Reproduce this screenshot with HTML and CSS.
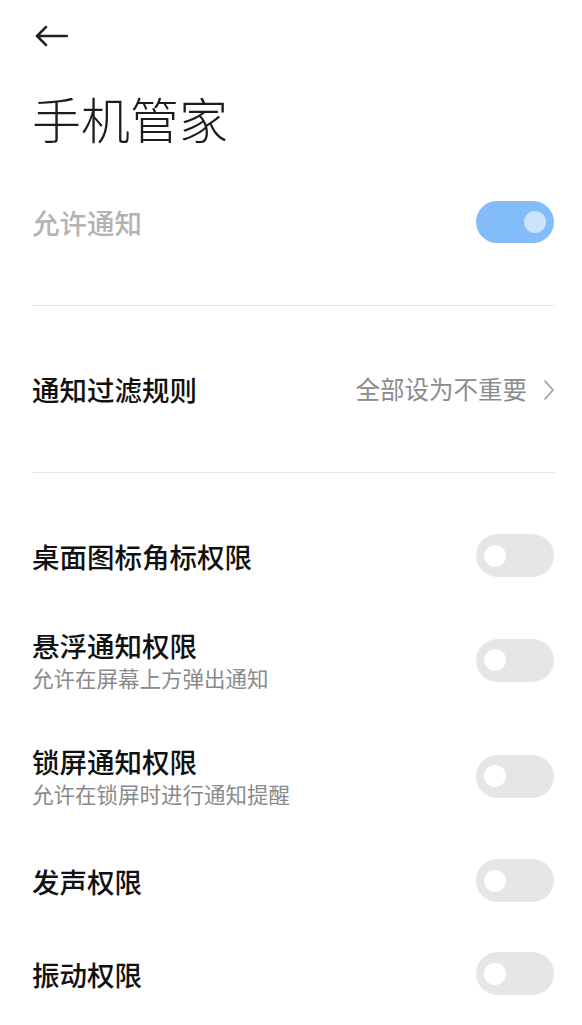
FILE: index.html
```html
<!DOCTYPE html>
<html lang="zh-CN">
<head>
<meta charset="utf-8">
<title>手机管家</title>
<link rel="stylesheet" href="styles.css">
</head>
<body>
<div class="page">
  <header class="header">
    <svg class="back" width="34" height="22" viewBox="0 0 34 22" aria-hidden="true">
      <path d="M33 11 H3 M12 2 L3 11 L12 20" fill="none" stroke="#222" stroke-width="2.5" stroke-linecap="round" stroke-linejoin="round"/>
    </svg>
  </header>
  <h1 class="title">手机管家</h1>

  <div class="allow-row">
    <span class="allow-label">允许通知</span>
    <span class="toggle on"><span class="knob"></span></span>
  </div>

  <div class="divider first"></div>

  <div class="filter-row">
    <span class="row-title">通知过滤规则</span>
    <span class="filter-value">全部设为不重要
      <svg class="chev" width="12" height="22" viewBox="0 0 12 22" aria-hidden="true">
        <path d="M2 2 L10 11 L2 20" fill="none" stroke="#9a9a9a" stroke-width="1.6" stroke-linecap="round" stroke-linejoin="round"/>
      </svg>
    </span>
  </div>

  <div class="divider"></div>

  <div class="rows">
    <div class="row">
      <div class="text"><div class="row-title">桌面图标角标权限</div></div>
      <span class="toggle"><span class="knob"></span></span>
    </div>
    <div class="row tall">
      <div class="text"><div class="row-title">悬浮通知权限</div><div class="row-sub">允许在屏幕上方弹出通知</div></div>
      <span class="toggle"><span class="knob"></span></span>
    </div>
    <div class="row tall">
      <div class="text"><div class="row-title">锁屏通知权限</div><div class="row-sub">允许在锁屏时进行通知提醒</div></div>
      <span class="toggle"><span class="knob"></span></span>
    </div>
    <div class="row">
      <div class="text"><div class="row-title">发声权限</div></div>
      <span class="toggle"><span class="knob"></span></span>
    </div>
    <div class="row">
      <div class="text"><div class="row-title">振动权限</div></div>
      <span class="toggle"><span class="knob"></span></span>
    </div>
  </div>
</div>
</body>
</html>
```

FILE: styles.css
```css
* { box-sizing: border-box; }
html, body { margin: 0; padding: 0; background: #fff; }
body {
  font-family: "Noto Sans CJK SC", "Noto Sans", sans-serif;
  color: #111;
  width: 582px;
  overflow: hidden;
}
.page {
  padding: 0 27px 0 32px;
}
.header {
  height: 72px;
  display: flex;
  align-items: center;
  padding-left: 2px;
}
.back { display: block; }
.title {
  margin: 16px 0 0 0;
  font-size: 49px;
  line-height: 60px;
  font-weight: 300;
  color: #1c1c1c;
}
.allow-row {
  margin-top: 30px;
  height: 88px;
  display: flex;
  align-items: center;
  justify-content: space-between;
}
.allow-label {
  font-size: 27.5px;
  line-height: 36px;
  font-weight: 500;
  color: #b3b3b3;
}
.divider {
  height: 1px;
  background: #e6e6e6;
}
.divider.first { margin-top: 39px; }
.filter-row {
  height: 166px;
  display: flex;
  align-items: center;
  justify-content: space-between;
}
.filter-value {
  display: flex;
  align-items: center;
  gap: 16px;
  font-size: 24.5px;
  line-height: 34px;
  color: #8c8c8c;
}
.chev { display: block; margin-top: 1px; }
.rows { padding-top: 36px; }
.row {
  min-height: 93px;
  padding: 21px 0;
  display: flex;
  align-items: center;
  justify-content: space-between;
}
.row.tall { padding: 25px 0; }
.row-title {
  font-size: 27.5px;
  line-height: 36px;
  font-weight: 500;
  color: #111;
}
.row-sub {
  font-size: 21.5px;
  line-height: 30px;
  color: #8a8a8a;
}
.toggle {
  position: relative;
  flex: none;
  width: 78px;
  height: 43px;
  border-radius: 22px;
  background: #e6e6e6;
  margin-right: 1px;
}
.toggle .knob {
  position: absolute;
  top: 50%;
  left: 8px;
  width: 22px;
  height: 22px;
  margin-top: -11px;
  border-radius: 50%;
  background: #fff;
}
.toggle.on { background: #82bcf9; height: 42px; }
.toggle.on .knob {
  left: auto;
  right: 8px;
  background: #cbe3fc;
}
```
